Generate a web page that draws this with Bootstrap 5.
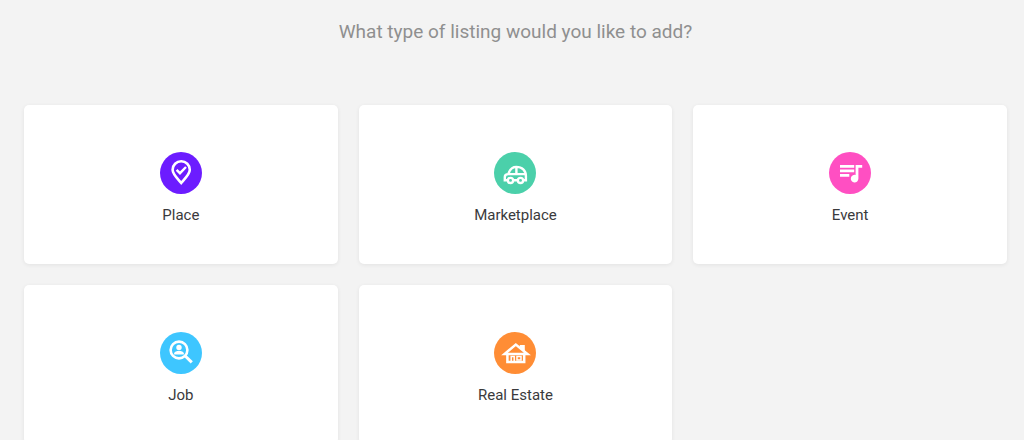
<!DOCTYPE html>
<html lang="en">
<head>
<meta charset="utf-8">
<meta name="viewport" content="width=device-width, initial-scale=1">
<title>Add a listing</title>
<link href="https://cdn.jsdelivr.net/npm/bootstrap@5.3.0/dist/css/bootstrap.min.css" rel="stylesheet">
<style>
body { background: #f3f3f3; font-family: Roboto, sans-serif; color: #3a3a3c; }
.page { padding: 20px 17px 21px 24px; }
.question { font-size: 19px; line-height: 24px; font-weight: 400; color: #8f8f8f; margin-bottom: 61px; }
.types { --bs-gutter-x: 21px; --bs-gutter-y: 21px; }
.type-card { height: 159px; border-radius: 5px; background: #fff; color: inherit; box-shadow: 0 1px 4px rgba(0,0,0,.07); font-size: 15px; line-height: 20px; padding-top: 8px; }
.type-card:hover { color: inherit; box-shadow: 0 2px 10px rgba(0,0,0,.15); }
.type-icon { width: 42px; height: 42px; border-radius: 50%; margin-bottom: 11px; fill: none; stroke: #fff; stroke-width: 2.6; }
.solid { fill: #fff; stroke: none; }
.place { background: #6c1cff; }
.market { background: #4bd0aa; }
.event { background: #ff4fc2; }
.job { background: #3ec6ff; }
.estate { background: #ff8d35; }
</style>
</head>
<body>
<main class="page container-fluid">
  <h1 class="question text-center">What type of listing would you like to add?</h1>
  <div class="row row-cols-3 types">
    <div class="col"><a href="#place" class="type-card d-flex flex-column align-items-center justify-content-center text-decoration-none">
      <svg class="type-icon place" viewBox="0 0 42 42" aria-hidden="true"><path d="M21.2 31C18 27 12.6 22.3 12.6 17.8a8.6 8.6 0 0 1 17.2 0C29.8 22.3 24.4 27 21.2 31Z"/><path d="m16.6 17.8 3.4 3.4 6-6.2" stroke-width="2.4"/></svg>
      <span>Place</span></a></div>
    <div class="col"><a href="#marketplace" class="type-card d-flex flex-column align-items-center justify-content-center text-decoration-none">
      <svg class="type-icon market" viewBox="0 0 42 42" aria-hidden="true"><path d="M13.3 28.3H10.8V25c0-2 1.3-2.9 3.5-2.9 1.5-4.6 3.9-7.2 8-7.2 5.8 0 9.6 3.7 9.6 9.2v4.2h-2.3M19.4 28.3h4M14.3 22.1h16.9M22.4 15v7" stroke-width="2.4"/><circle cx="16.5" cy="28.4" r="2.6" stroke-width="2.3"/><circle cx="26.5" cy="28.4" r="2.6" stroke-width="2.3"/></svg>
      <span>Marketplace</span></a></div>
    <div class="col"><a href="#event" class="type-card d-flex flex-column align-items-center justify-content-center text-decoration-none">
      <svg class="type-icon event" viewBox="0 0 42 42" aria-hidden="true"><path d="M11 14.4h14.2M11 18.9h14.2M11 23.4h9.3"/><path class="solid" d="M26.6 13h6.6v2.8h-3.8v10.8a3.8 3.8 0 1 1-2.8-3.6Z"/></svg>
      <span>Event</span></a></div>
    <div class="col"><a href="#job" class="type-card d-flex flex-column align-items-center justify-content-center text-decoration-none">
      <svg class="type-icon job" viewBox="0 0 42 42" aria-hidden="true"><circle cx="19" cy="18" r="8.4"/><path d="m25.2 24 6.6 6.4" stroke-width="3"/><circle class="solid" cx="19" cy="15.4" r="2.7"/><path class="solid" d="M14.2 22.5v-1.2c0-1.7 2.7-2.6 4.8-2.6s4.8.9 4.8 2.6v1.2Z"/></svg>
      <span>Job</span></a></div>
    <div class="col"><a href="#real-estate" class="type-card d-flex flex-column align-items-center justify-content-center text-decoration-none">
      <svg class="type-icon estate" viewBox="0 0 42 42" aria-hidden="true"><path d="M10.6 21.9 21.8 12.6l11.6 9.3Z" stroke-width="2.5"/><path class="solid" d="M25.8 13h5v7.5l-5-4Z"/><path d="M13.4 22v8h16.8v-8" stroke-width="2.5"/><path d="M17.2 29.5v-5h3v5M23 24.5h4v3.4h-4Z" stroke-width="1.5"/></svg>
      <span>Real Estate</span></a></div>
  </div>
</main>
<script src="https://cdn.jsdelivr.net/npm/bootstrap@5.3.0/dist/js/bootstrap.bundle.min.js"></script>
</body>
</html>
